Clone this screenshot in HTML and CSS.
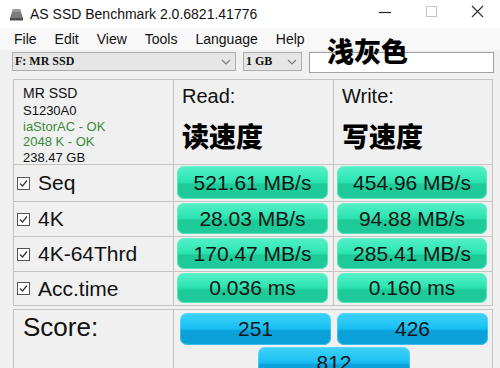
FILE: index.html
```html
<!DOCTYPE html>
<html>
<head>
<meta charset="utf-8">
<link rel="stylesheet" href="styles.css">
</head>
<body>
<div class="window">
  <div class="titlebar">
    <svg class="app-icon" width="15" height="13" viewBox="0 0 15 13">
      <path d="M4 1 L11 1 L14 10 L1 10 Z" fill="#7a7a7a"/>
      <path d="M4 1 L11 1 L12 4 L3 4 Z" fill="#9a9a9a"/>
      <rect x="1" y="10" width="13" height="2.5" fill="#4d4d4d"/>
    </svg>
    <span class="title">AS SSD Benchmark 2.0.6821.41776</span>
    <div class="controls">
      <svg class="ctl" width="46" height="28" viewBox="0 0 46 28"><line x1="17" y1="12.5" x2="29" y2="12.5" stroke="#222" stroke-width="1.2"/></svg>
      <svg class="ctl" width="46" height="28" viewBox="0 0 46 28"><rect x="18.5" y="6.5" width="10" height="10" fill="none" stroke="#c4c4c4" stroke-width="1"/></svg>
      <svg class="ctl" width="46" height="28" viewBox="0 0 46 28"><path d="M18 6 L29 17 M29 6 L18 17" stroke="#333" stroke-width="1.2"/></svg>
    </div>
  </div>
  <div class="menubar">
    <span>File</span><span>Edit</span><span>View</span><span>Tools</span><span>Language</span><span>Help</span>
  </div>
  <div class="toolbar">
    <div class="combo drive"><span class="combo-text">F: MR SSD</span><svg class="chev" width="10" height="6" viewBox="0 0 10 6"><path d="M1 1 L5 5 L9 1" fill="none" stroke="#777" stroke-width="1.1"/></svg></div>
    <div class="combo size"><span class="combo-text">1 GB</span><svg class="chev" width="10" height="6" viewBox="0 0 10 6"><path d="M1 1 L5 5 L9 1" fill="none" stroke="#777" stroke-width="1.1"/></svg></div>
    <div class="textbox"></div>
    <span class="note">浅灰色</span>
  </div>

  <div class="results">
    <div class="cell info">
      <div class="info-name">MR SSD</div>
      <div>S1230A0</div>
      <div class="ok">iaStorAC - OK</div>
      <div class="ok">2048 K - OK</div>
      <div>238.47 GB</div>
    </div>
    <div class="cell head">
      <div class="head-en">Read:</div>
      <div class="head-cn">读速度</div>
    </div>
    <div class="cell head">
      <div class="head-en">Write:</div>
      <div class="head-cn">写速度</div>
    </div>

    <div class="cell label"><svg class="chk" width="13" height="13" viewBox="0 0 13 13"><rect x="0.5" y="0.5" width="12" height="12" fill="#fff" stroke="#555"/><path d="M3 6.5 L5.5 9 L10 3.5" fill="none" stroke="#333" stroke-width="1.2"/></svg><span>Seq</span></div>
    <div class="cell val"><div class="bar green">521.61 MB/s</div></div>
    <div class="cell val"><div class="bar green">454.96 MB/s</div></div>

    <div class="cell label"><svg class="chk" width="13" height="13" viewBox="0 0 13 13"><rect x="0.5" y="0.5" width="12" height="12" fill="#fff" stroke="#555"/><path d="M3 6.5 L5.5 9 L10 3.5" fill="none" stroke="#333" stroke-width="1.2"/></svg><span>4K</span></div>
    <div class="cell val"><div class="bar green">28.03 MB/s</div></div>
    <div class="cell val"><div class="bar green">94.88 MB/s</div></div>

    <div class="cell label"><svg class="chk" width="13" height="13" viewBox="0 0 13 13"><rect x="0.5" y="0.5" width="12" height="12" fill="#fff" stroke="#555"/><path d="M3 6.5 L5.5 9 L10 3.5" fill="none" stroke="#333" stroke-width="1.2"/></svg><span>4K-64Thrd</span></div>
    <div class="cell val"><div class="bar green">170.47 MB/s</div></div>
    <div class="cell val"><div class="bar green">285.41 MB/s</div></div>

    <div class="cell label"><svg class="chk" width="13" height="13" viewBox="0 0 13 13"><rect x="0.5" y="0.5" width="12" height="12" fill="#fff" stroke="#555"/><path d="M3 6.5 L5.5 9 L10 3.5" fill="none" stroke="#333" stroke-width="1.2"/></svg><span>Acc.time</span></div>
    <div class="cell val"><div class="bar green">0.036 ms</div></div>
    <div class="cell val"><div class="bar green">0.160 ms</div></div>
  </div>

  <div class="score">
    <div class="cell score-label">Score:</div>
    <div class="cell score-vals">
      <div class="score-pair">
        <div class="bar blue">251</div>
        <div class="bar blue">426</div>
      </div>
      <div class="bar blue total">812</div>
    </div>
  </div>
</div>
</body>
</html>
```

FILE: styles.css
```css
* { box-sizing: border-box; }
html, body { margin: 0; padding: 0; }
body {
  width: 500px;
  height: 368px;
  overflow: hidden;
  background: #f0f0f0;
  font-family: "Liberation Sans", Arial, sans-serif;
  color: #111;
}
.window { width: 500px; height: 368px; overflow: hidden; }

.titlebar {
  height: 28px;
  background: #fff;
  display: flex;
  align-items: center;
}
.app-icon { margin-left: 9px; margin-right: 6px; }
.title { font-size: 14px; color: #111; }
.controls { margin-left: auto; display: flex; }
.ctl { display: block; }

.menubar {
  height: 22px;
  background: #f8f8f8;
  display: flex;
  align-items: center;
  gap: 18px;
  padding-left: 14px;
  font-size: 14px;
  color: #111;
}

.toolbar {
  position: relative;
  display: flex;
  align-items: flex-start;
  padding: 2px 0 0 12px;
  height: 29px;
}
.combo {
  height: 19px;
  background: #e6e6e6;
  border: 1px solid #adadad;
  display: flex;
  align-items: center;
  justify-content: space-between;
  padding: 0 4px 0 2px;
}
.combo-text {
  font-family: "Liberation Serif", "DejaVu Serif", serif;
  font-size: 12px;
  font-weight: bold;
  color: #111;
}
.drive { width: 224px; }
.size { width: 59px; margin-left: 7px; }
.textbox {
  width: 185px;
  height: 21px;
  margin-left: 7px;
  background: #fff;
  border: 1px solid #a0a0a0;
}
.note {
  position: absolute;
  left: 327px;
  top: -17px;
  font-family: "Noto Sans CJK SC", sans-serif;
  font-weight: 900;
  font-size: 27px;
  line-height: 36px;
  color: #000;
}

.results, .score {
  margin-left: 13px;
  width: 480px;
  display: grid;
  gap: 1px;
  background: #c4c4c4;
  border: 1px solid #c4c4c4;
}
.results {
  grid-template-columns: 159px 159px 158px;
  grid-template-rows: 84px 36px 34px 34px 33px;
}
.cell { background: #f0f0f0; }

.info {
  padding: 4px 0 0 9px;
  font-size: 13px;
  line-height: 15.5px;
  color: #111;
}
.info-name { font-size: 14px; line-height: 19px; }
.ok { color: #3a8a3a; }

.head { padding: 4px 0 0 8px; }
.head-en { font-size: 20px; line-height: 24px; }
.head-cn {
  margin-top: 12px;
  font-family: "Noto Sans CJK SC", sans-serif;
  font-weight: 900;
  font-size: 27px;
  line-height: 31px;
  color: #000;
}

.label {
  display: flex;
  align-items: center;
  padding-left: 3px;
  font-size: 21px;
}
.chk { margin-right: 8px; flex: none; }

.val { padding: 1px 5px 2px 3px; }
.bar {
  height: 100%;
  border-radius: 7px;
  display: flex;
  align-items: center;
  justify-content: center;
  font-size: 21px;
  color: #141414;
}
.green {
  background: linear-gradient(to bottom, #55f0c8 0%, #33e7b5 40%, #2ae0ae 50%, #1ccb98 56%, #1ec99a 100%);
  box-shadow: inset 0 0 0 1px rgba(120, 240, 205, 0.6);
}
.blue {
  background: linear-gradient(to bottom, #3fd2fb 0%, #1ec3f4 42%, #17bbef 50%, #0aa1da 56%, #0c9fd6 100%);
  box-shadow: inset 0 0 0 1px rgba(110, 220, 250, 0.5);
}

.score {
  margin-top: 3px;
  grid-template-columns: 159px 318px;
  height: 62px;
}
.score-label {
  padding: 2px 0 0 9px;
  font-size: 26px;
  line-height: 30px;
}
.score-vals {
  padding: 3px 4px 0 6px;
  display: flex;
  flex-direction: column;
  align-items: center;
  gap: 2px;
  overflow: hidden;
}
.score-pair {
  width: 100%;
  display: grid;
  grid-template-columns: 151px 151px;
  gap: 6px;
}
.score-pair .bar, .total { height: 32px; flex: none; }
.total { width: 152px; }
```
